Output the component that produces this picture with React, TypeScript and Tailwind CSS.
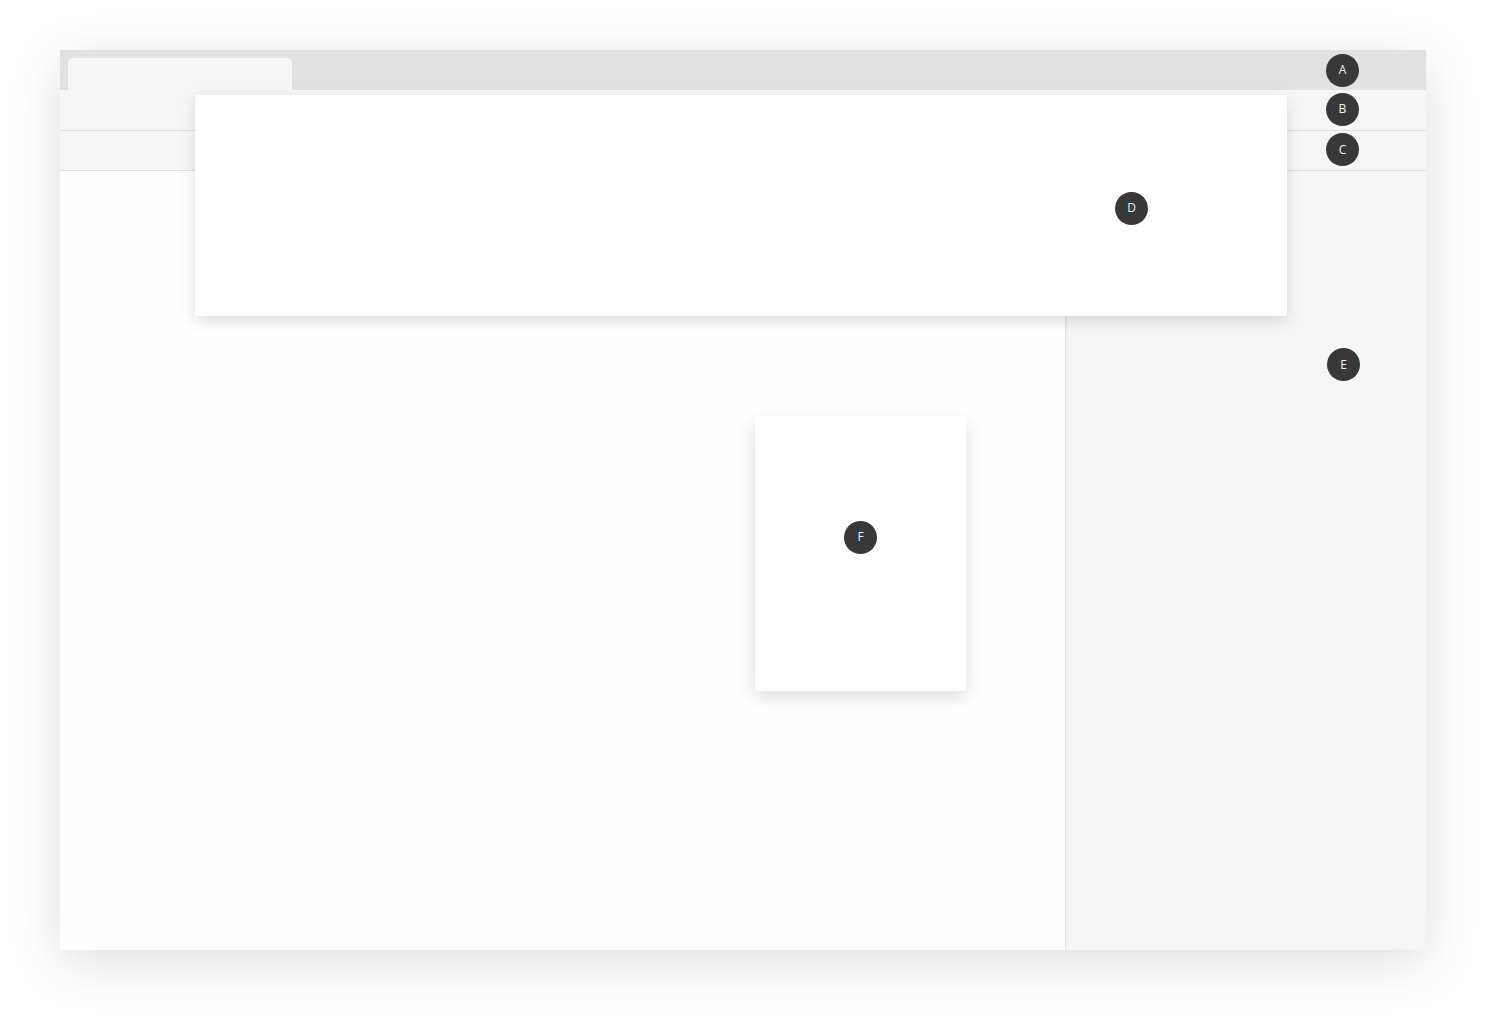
const font = { fontFamily: '"Open Sans", "Liberation Sans", sans-serif' }

function Badge({ label }: { label: string }) {
  return (
    <div
      className="grid h-[33px] w-[33px] shrink-0 place-items-center rounded-full bg-[#383838] text-[12px] leading-none text-[#f2f2f2]"
      style={font}
    >
      {label}
    </div>
  )
}

export default function App() {
  return (
    <div className="min-h-[1020px] w-full bg-white pl-[60px] pt-[50px]">
      <div className="relative flex h-[900px] w-[1366px] flex-col bg-[#fefefe] shadow-[0_12px_50px_rgba(0,0,0,0.13)]">
        {/* Tab strip */}
        <div className="flex h-10 items-end justify-between bg-[#e1e1e1] pl-2 pr-[67px]">
          <div className="h-8 w-[224px] rounded-t-[5px] bg-[#f6f6f6]" />
          <div className="flex h-10 items-center">
            <Badge label="A" />
          </div>
        </div>

        {/* Toolbar */}
        <div className="flex h-[41px] items-center justify-end border-b border-[#dfdfdf] bg-[#f6f6f6] pb-[2px] pr-[67px]">
          <Badge label="B" />
        </div>

        {/* Secondary bar */}
        <div className="flex h-10 items-center justify-end border-b border-[#dfdfdf] bg-[#f6f6f6] pb-[2px] pr-[67px]">
          <Badge label="C" />
        </div>

        {/* Body */}
        <div className="flex flex-1">
          <div className="flex-1 bg-[#fefefe]" />
          <div className="flex w-[361px] justify-end border-l border-[#e4e4e4] bg-[#f6f6f6] pr-[66px] pt-[177px] shadow-[inset_1px_0_2px_rgba(0,0,0,0.03)]">
            <Badge label="E" />
          </div>
        </div>

        {/* Dropdown panel */}
        <div className="absolute left-[135px] top-[45px] flex h-[221px] w-[1092px] items-center justify-end rounded-[3px] bg-white pr-[139px] pt-[5px] shadow-[0_5px_16px_rgba(0,0,0,0.13)]">
          <Badge label="D" />
        </div>

        {/* Floating card */}
        <div className="absolute left-[695px] top-[366px] flex h-[275px] w-[211px] items-center justify-center rounded-[3px] bg-white pb-[33px] shadow-[0_6px_18px_rgba(0,0,0,0.13)]">
          <Badge label="F" />
        </div>
      </div>
    </div>
  )
}
